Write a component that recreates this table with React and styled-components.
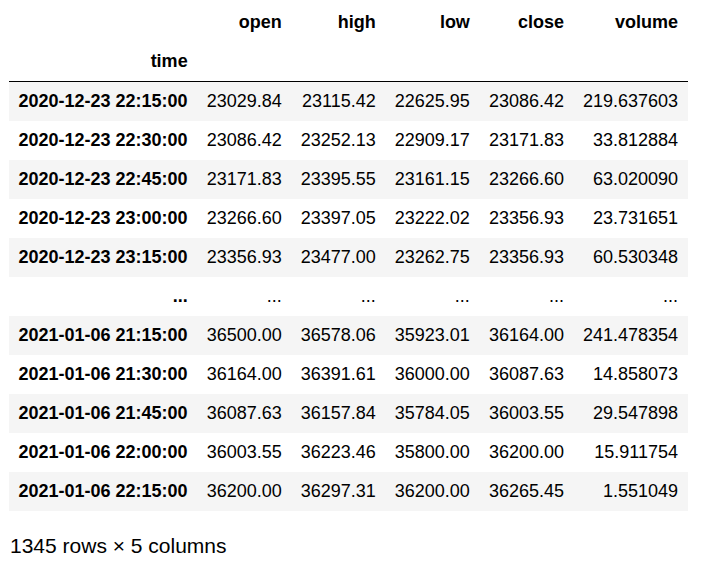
import React from "react";
import styled, { createGlobalStyle } from "styled-components";

const GlobalStyle = createGlobalStyle`
  body {
    margin: 0;
    background: #fff;
    color: #000;
    font-family: "Liberation Sans", Arial, sans-serif;
  }
`;

const Output = styled.div`
  padding: 3px 0 0 9px;
`;

const Table = styled.table`
  border: none;
  border-collapse: collapse;
  border-spacing: 0;
  font-size: 18px;
  color: #000;
`;

const Head = styled.thead`
  border-bottom: 1px solid #000;
  vertical-align: bottom;
`;

const Row = styled.tr`
  background: ${(p) => (p.$shade ? "#f5f5f5" : "transparent")};
`;

const Th = styled.th`
  text-align: right;
  vertical-align: middle;
  padding: 9px 9.5px;
  line-height: normal;
  font-weight: bold;
  white-space: nowrap;
`;

const Td = styled.td`
  text-align: right;
  vertical-align: middle;
  padding: 9px 9.5px;
  line-height: normal;
  white-space: nowrap;
`;

const Summary = styled.p`
  margin: 20px 0 0 1px;
  font-size: 21px;
  line-height: 30px;
`;

const columns = ["open", "high", "low", "close", "volume"];

const rows = [
  ["2020-12-23 22:15:00", "23029.84", "23115.42", "22625.95", "23086.42", "219.637603"],
  ["2020-12-23 22:30:00", "23086.42", "23252.13", "22909.17", "23171.83", "33.812884"],
  ["2020-12-23 22:45:00", "23171.83", "23395.55", "23161.15", "23266.60", "63.020090"],
  ["2020-12-23 23:00:00", "23266.60", "23397.05", "23222.02", "23356.93", "23.731651"],
  ["2020-12-23 23:15:00", "23356.93", "23477.00", "23262.75", "23356.93", "60.530348"],
  ["...", "...", "...", "...", "...", "..."],
  ["2021-01-06 21:15:00", "36500.00", "36578.06", "35923.01", "36164.00", "241.478354"],
  ["2021-01-06 21:30:00", "36164.00", "36391.61", "36000.00", "36087.63", "14.858073"],
  ["2021-01-06 21:45:00", "36087.63", "36157.84", "35784.05", "36003.55", "29.547898"],
  ["2021-01-06 22:00:00", "36003.55", "36223.46", "35800.00", "36200.00", "15.911754"],
  ["2021-01-06 22:15:00", "36200.00", "36297.31", "36200.00", "36265.45", "1.551049"],
];

const App = () => (
  <Output>
    <GlobalStyle />
    <Table>
      <Head>
        <tr>
          <Th />
          {columns.map((c) => (
            <Th key={c}>{c}</Th>
          ))}
        </tr>
        <tr>
          <Th>time</Th>
          {columns.map((c) => (
            <Th key={c} />
          ))}
        </tr>
      </Head>
      <tbody>
        {rows.map(([time, ...vals], i) => (
          <Row key={i} $shade={i % 2 === 0}>
            <Th>{time}</Th>
            {vals.map((v, j) => (
              <Td key={j}>{v}</Td>
            ))}
          </Row>
        ))}
      </tbody>
    </Table>
    <Summary>1345 rows × 5 columns</Summary>
  </Output>
);

export default App;
